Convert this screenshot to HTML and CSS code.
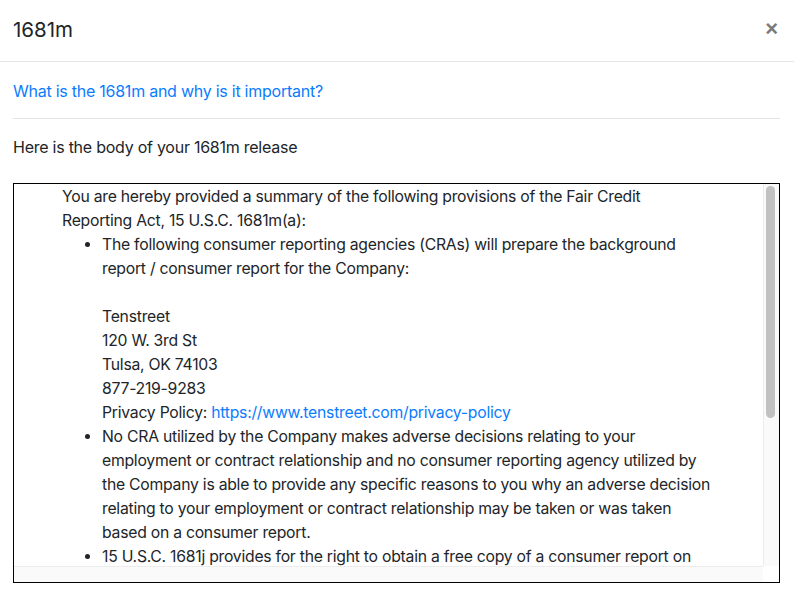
FILE: index.html
```html
<!DOCTYPE html>
<html lang="en">
<head>
<meta charset="utf-8">
<title>1681m</title>
<link rel="stylesheet" href="styles.css">
</head>
<body>
<div class="modal">
  <div class="modal-header">
    <h5 class="modal-title">1681m</h5>
    <button class="close" type="button" aria-label="Close">&times;</button>
  </div>
  <div class="modal-body">
    <a class="info-link" href="#">What is the 1681m and why is it important?</a>
    <hr class="divider">
    <p class="intro">Here is the body of your 1681m release</p>
    <div class="release-box">
      <div class="release-content">
        <p class="lead-text">You are hereby provided a summary of the following provisions of the Fair Credit Reporting Act, 15 U.S.C. 1681m(a):</p>
        <ul class="provisions">
          <li>The following consumer reporting agencies (CRAs) will prepare the background report / consumer report for the Company:<br><br>Tenstreet<br>120 W. 3rd St<br>Tulsa, OK 74103<br>877-219-9283<br>Privacy Policy: <a href="#">https://www.tenstreet.com/privacy-policy</a></li>
          <li>No CRA utilized by the Company makes adverse decisions relating to your employment or contract relationship and no consumer reporting agency utilized by the Company is able to provide any specific reasons to you why an adverse decision relating to your employment or contract relationship may be taken or was taken based on a consumer report.</li>
          <li>15 U.S.C. 1681j provides for the right to obtain a free copy of a consumer report on you from the CRA within 60 days of receiving this notice.</li>
          <li>15 U.S.C. 1681i provides for the right to dispute with the CRA the accuracy or completeness of any information in a consumer report furnished by the CRA.</li>
          <li>You have the right to request a summary of your rights under the Fair Credit Reporting Act.</li>
        </ul>
      </div>
      <div class="vscroll"><div class="vthumb"></div></div>
      <div class="hscroll"></div>
      <div class="corner"></div>
    </div>
  </div>
</div>
</body>
</html>
```

FILE: styles.css
```css
* { box-sizing: border-box; }

html, body {
  margin: 0;
  padding: 0;
  background: #ffffff;
}

body {
  font-family: Inter, "Liberation Sans", Arial, sans-serif;
  color: #212529;
}

.modal {
  width: 794px;
  height: 599px;
  overflow: hidden;
}

.modal-header {
  height: 62px;
  padding: 0 14px 0 13px;
  display: flex;
  align-items: center;
  justify-content: space-between;
  border-bottom: 1px solid #e6e6e6;
}

.modal-title {
  margin: 0 0 2px 0;
  font-size: 20.5px;
  font-weight: 400;
  color: #212529;
  line-height: 24px;
}

.close {
  border: 0;
  background: none;
  padding: 0;
  margin: 0 2px 4px 0;
  font-family: "Liberation Sans", Arial, sans-serif;
  font-size: 22px;
  font-weight: 700;
  line-height: 1;
  color: #7a7a7a;
  cursor: pointer;
}

.modal-body {
  padding: 18px 14px 0 13px;
}

.info-link {
  display: block;
  font-size: 16px;
  letter-spacing: -0.25px;
  line-height: 22px;
  color: #0a7cff;
  text-decoration: none;
}

.divider {
  margin: 16px 0 0 0;
  border: 0;
  border-top: 1px solid #e3e3e3;
  height: 0;
}

.intro {
  margin: 17px 0 0 0;
  font-size: 16px;
  letter-spacing: -0.25px;
  line-height: 22px;
}

.release-box {
  margin-top: 25px;
  border: 1px solid #000;
  height: 400px;
  display: grid;
  grid-template-columns: 1fr 16px;
  grid-template-rows: 1fr 16px;
  overflow: hidden;
}

.release-content {
  overflow: hidden;
  padding: 1px 51px 0 48px;
  font-size: 15.75px;
  letter-spacing: -0.25px;
  line-height: 24px;
  color: #212529;
}

.release-content a {
  color: #0a7cff;
  text-decoration: none;
}

.lead-text {
  margin: 0;
}

.provisions {
  margin: 0;
  padding-left: 40px;
}

.vscroll {
  background: #fafafa;
  border-left: 1px solid #ececec;
  padding: 2px 4px 0 2px;
}

.vthumb {
  height: 232px;
  background: #c1c1c1;
  border-radius: 5px;
}

.hscroll {
  background: #fafafa;
  border-top: 1px solid #ececec;
}

.corner {
  background: #ffffff;
}
```
